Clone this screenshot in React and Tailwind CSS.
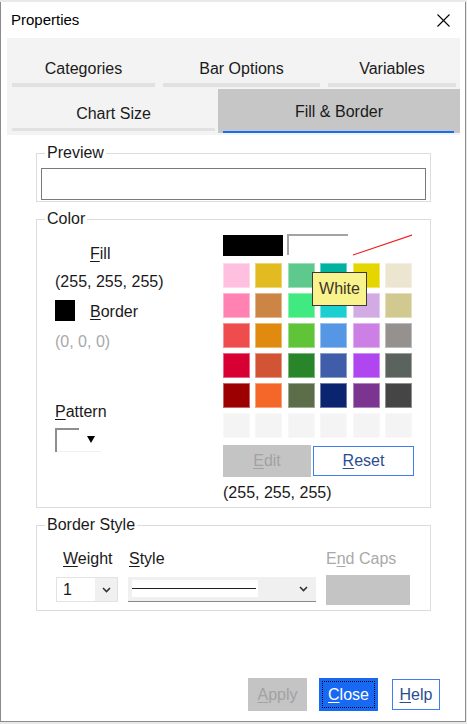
import React from "react";

const swatches = [
  ["#ffc0df", "#e1bb20", "#5ec98d", "#00b3a0", "#e6d600", "#ece5d0"],
  ["#ff82b3", "#cc8544", "#40ea80", "#1ccfd0", "#d2aae4", "#d1c990"],
  ["#ef4d4d", "#e08a10", "#60c439", "#5596e5", "#cc80e5", "#95918e"],
  ["#d80032", "#d15535", "#298529", "#405da9", "#b046f0", "#5a635e"],
  ["#9c0000", "#f46729", "#5c6d4a", "#0b2470", "#7b3590", "#454545"],
  ["#f4f4f4", "#f4f4f4", "#f4f4f4", "#f4f4f4", "#f4f4f4", "#f4f4f4"],
];

function Chevron() {
  return (
    <svg width="9" height="6" viewBox="0 0 9 6">
      <polyline points="1,1 4.5,4.5 8,1" fill="none" stroke="#333" strokeWidth="1.6" />
    </svg>
  );
}

export default function App() {
  return (
    <div
      className="w-[467px] h-[724px] bg-[#e9e9e9] flex flex-col overflow-hidden text-[16px] text-[#1a1a1a]"
      style={{ fontFamily: '"Liberation Sans", Arial, sans-serif' }}
    >
      <div className="h-[2px] shrink-0" />
      <div className="flex h-[720px] w-[466px] shrink-0 flex-col border border-t-0 border-[#8c8c8c] bg-white">
        {/* Title bar */}
        <div className="flex h-[36px] shrink-0 items-center justify-between pl-[10px] pr-[15px]">
          <span className="text-[15px] leading-[20px] text-black">Properties</span>
          <svg width="13" height="13" viewBox="0 0 13 13">
            <line x1="0.5" y1="0.5" x2="12.5" y2="12.5" stroke="#000" strokeWidth="1.1" />
            <line x1="12.5" y1="0.5" x2="0.5" y2="12.5" stroke="#000" strokeWidth="1.1" />
          </svg>
        </div>

        {/* Tabs */}
        <div className="ml-[6px] mr-[5px] h-[97px] shrink-0 bg-[#f3f3f3]">
          <div className="flex gap-[8px] pl-[5px] pt-[6px]">
            {[
              ["Categories", "w-[143px]"],
              ["Bar Options", "w-[157px]"],
              ["Variables", "w-[128px]"],
            ].map(([t, w]) => (
              <div key={t} className={`${w} flex h-[43px] flex-col`}>
                <div className="pt-[15px] text-center leading-[20px]">{t}</div>
                <div className="mt-auto h-[4px] bg-[#e1e1e1]" />
              </div>
            ))}
          </div>
          <div className="mt-[2px] flex gap-[3px] pl-[5px]">
            <div className="flex h-[44px] w-[203px] flex-col">
              <div className="pt-[15px] text-center leading-[20px]">Chart Size</div>
              <div className="mb-[2px] mt-auto h-[3px] bg-[#e1e1e1]" />
            </div>
            <div className="flex h-[44px] flex-1 flex-col bg-[#c6c6c6]">
              <div className="pt-[13px] text-center leading-[20px]">Fill &amp; Border</div>
              <div className="ml-[5px] mr-[6px] mt-auto h-[2px] bg-[#1a6cf2]" />
            </div>
          </div>
        </div>

        {/* Preview */}
        <fieldset className="ml-[35px] mt-[8px] w-[395px] border border-[#dcdcdc] pb-[1px]">
          <legend className="ml-[8px] px-[2px] leading-[20px]">Preview</legend>
          <div className="mx-[4px] mt-[5px] h-[32px] border border-[#7a7a7a] bg-white" />
        </fieldset>

        {/* Color */}
        <fieldset className="ml-[35px] mt-[7px] w-[395px] border border-[#dcdcdc] pb-[4px]">
          <legend className="ml-[8px] px-[2px] leading-[20px]">Color</legend>
          <div className="flex">
            <div className="flex w-[186px] flex-col pl-[18px]">
              <div className="mt-[15px] pl-[35px] leading-[20px]">
                <span className="underline underline-offset-[2px]">F</span>ill
              </div>
              <div className="mt-[8px] leading-[20px]">(255, 255, 255)</div>
              <div className="mt-[8px] flex items-start">
                <div className="h-[21px] w-[20px] bg-black" />
                <div className="ml-[15px] mt-[2px] leading-[20px]">
                  <span className="underline underline-offset-[2px]">B</span>order
                </div>
              </div>
              <div className="mt-[10px] leading-[20px] text-[#a9a9a9]">(0, 0, 0)</div>
              <div className="mt-[50px] leading-[20px]">
                <span className="underline underline-offset-[2px]">P</span>attern
              </div>
              <div className="mt-[6px] flex h-[24px] w-[46px] items-center border-b border-[#f0f0f0]">
                <div className="h-[24px] w-[24px] border-l-2 border-t-2 border-[#8e8e8e]" />
                <svg className="ml-[8px]" width="8" height="7" viewBox="0 0 8 7">
                  <polygon points="0,0 8,0 4,7" fill="#000" />
                </svg>
              </div>
            </div>

            <div className="relative flex flex-col">
              <div className="mt-[5px] flex items-start">
                <div className="mt-[1px] h-[21px] w-[60px] bg-black" />
                <div className="ml-[4px] h-[21px] w-[61px] border-l-2 border-t-2 border-[#a3a3a3] bg-white" />
                <svg className="ml-[4px]" width="60" height="22" viewBox="0 0 60 22">
                  <line x1="1" y1="21" x2="60" y2="1" stroke="#f02020" strokeWidth="1.2" />
                </svg>
              </div>
              <div className="mt-[7px] grid w-[189px] grid-cols-6 gap-x-[5.4px] gap-y-[5px]">
                {swatches.flat().map((c, i) => (
                  <div
                    key={i}
                    className="h-[25px] border border-white/40"
                    style={{ backgroundColor: c }}
                  />
                ))}
              </div>
              <div className="absolute left-[89px] top-[43px] flex h-[34px] w-[55px] items-center justify-center border border-[#3a3a3a] bg-[#f9f38e] leading-[20px] text-[#3d3528]">
                White
              </div>
              <div className="mt-[7px] flex items-start">
                <div className="flex h-[32px] w-[88px] items-center justify-center bg-[#c4c4c4] text-[#a2a2a2]">
                  <span className="underline underline-offset-[2px]">E</span>dit
                </div>
                <div className="ml-[2px] mt-[1px] flex h-[30px] w-[101px] items-center justify-center border-[1.5px] border-[#3f7ef0] bg-white text-[#2a4d8f]">
                  <span className="underline underline-offset-[2px]">R</span>eset
                </div>
              </div>
              <div className="mt-[6px] leading-[20px]">(255, 255, 255)</div>
            </div>
          </div>
        </fieldset>

        {/* Border Style */}
        <fieldset className="ml-[35px] mt-[7px] w-[395px] border border-[#dcdcdc] pb-[5px]">
          <legend className="ml-[8px] px-[2px] leading-[20px]">Border Style</legend>
          <div className="mt-[14px] flex gap-[10px] pl-[19px] leading-[20px]">
            <div className="w-[62px] pl-[7px]">
              <span className="underline underline-offset-[2px]">W</span>eight
            </div>
            <div className="w-[188px] pl-[1px]">
              <span className="underline underline-offset-[2px]">S</span>tyle
            </div>
            <div className="w-[84px] text-[#a9a9a9]">
              E<span className="underline underline-offset-[2px]">n</span>d Caps
            </div>
          </div>
          <div className="mt-[6px] flex items-start gap-[10px] pl-[19px]">
            <div className="mt-[2px] flex h-[25px] w-[62px] border border-[#e2e2e2]">
              <div className="flex w-[38px] items-center bg-white pl-[6px] leading-[20px]">1</div>
              <div className="flex flex-1 items-center justify-center bg-[#f0f0f0]">
                <Chevron />
              </div>
            </div>
            <div className="mt-[2px] flex h-[25px] w-[188px] items-start border-b border-[#8a8a8a] bg-[#f0f0f0]">
              <div className="ml-[4px] mt-[3px] flex h-[17px] w-[126px] items-center bg-white">
                <div className="h-[1.5px] w-[124px] bg-[#222]" />
              </div>
              <div className="ml-auto mr-[8px] mt-[9px]">
                <Chevron />
              </div>
            </div>
            <div className="h-[30px] w-[84px] bg-[#c4c4c4]" />
          </div>
        </fieldset>

        <div className="flex-1" />

        {/* Bottom buttons */}
        <div className="flex items-start justify-end pb-[10px] pr-[25px]">
          <div className="flex h-[33px] w-[59px] items-center justify-center bg-[#c4c4c4] text-[#a2a2a2]">
            <span className="underline underline-offset-[2px]">A</span>pply
          </div>
          <div className="ml-[12px] flex h-[33px] w-[59px] items-center justify-center bg-[#1768f2] p-[3px]">
            <div className="flex h-full w-full items-center justify-center border border-dotted border-black text-white">
              <span className="underline underline-offset-[2px]">C</span>lose
            </div>
          </div>
          <div className="ml-[14px] mt-[1px] flex h-[31px] w-[48px] items-center justify-center border-[1.5px] border-[#3f7ef0] bg-white text-[#2a4d8f]">
            <span className="underline underline-offset-[2px]">H</span>elp
          </div>
        </div>
      </div>
    </div>
  );
}
